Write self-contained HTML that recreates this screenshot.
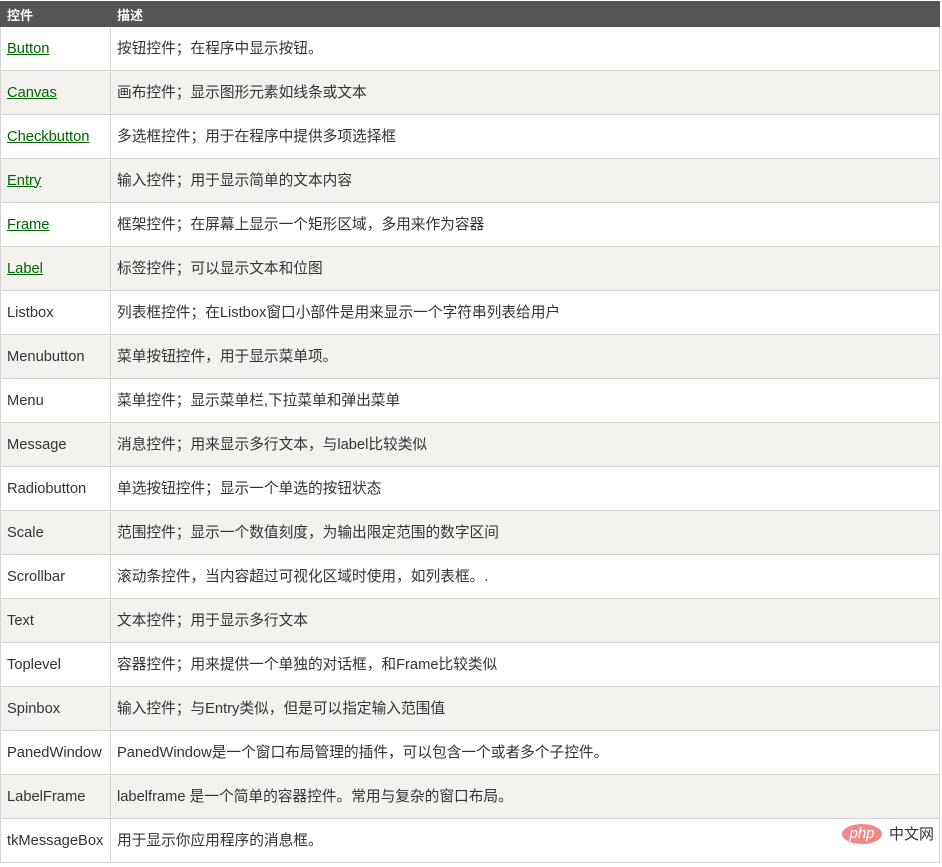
<!DOCTYPE html>
<html><head><meta charset="utf-8"><style>
body{margin:0;background:#fff;width:942px;height:867px;overflow:hidden;position:relative;font-family:"Liberation Sans","Noto Sans CJK SC",sans-serif;}
table{position:absolute;left:0;top:1px;border-collapse:collapse;width:940px;table-layout:fixed;font-size:14.7px;color:#333;}
th{background:#555;color:#fff;text-align:left;font-weight:bold;height:24px;padding:0 0 0 6px;font-size:13px;border:1px solid #555;}
td{height:43px;padding:0 0 0 6px;border:1px solid #d4d4d4;line-height:18px;}
tr:nth-child(even) td{background:#f3f2ee;}
tr:nth-child(odd) td{background:#fff;}
td a{color:#006600;text-decoration:underline;}
.wm{position:absolute;left:842px;top:823px;display:flex;align-items:center;}
.pill{width:40px;height:20px;border-radius:50%;background:#f08a8a;color:#fff;font-style:italic;font-size:15px;line-height:19px;text-align:center;}
.cn{margin-left:7px;font-size:15px;color:#333;}
</style></head><body>
<table>
<colgroup><col style="width:110px"><col></colgroup>
<thead><tr><th>控件</th><th>描述</th></tr></thead>
<tbody>
<tr><td><a>Button</a></td><td>按钮控件；在程序中显示按钮。</td></tr>
<tr><td><a>Canvas</a></td><td>画布控件；显示图形元素如线条或文本</td></tr>
<tr><td><a>Checkbutton</a></td><td>多选框控件；用于在程序中提供多项选择框</td></tr>
<tr><td><a>Entry</a></td><td>输入控件；用于显示简单的文本内容</td></tr>
<tr><td><a>Frame</a></td><td>框架控件；在屏幕上显示一个矩形区域，多用来作为容器</td></tr>
<tr><td><a>Label</a></td><td>标签控件；可以显示文本和位图</td></tr>
<tr><td>Listbox</td><td>列表框控件；在Listbox窗口小部件是用来显示一个字符串列表给用户</td></tr>
<tr><td>Menubutton</td><td>菜单按钮控件，用于显示菜单项。</td></tr>
<tr><td>Menu</td><td>菜单控件；显示菜单栏,下拉菜单和弹出菜单</td></tr>
<tr><td>Message</td><td>消息控件；用来显示多行文本，与label比较类似</td></tr>
<tr><td>Radiobutton</td><td>单选按钮控件；显示一个单选的按钮状态</td></tr>
<tr><td>Scale</td><td>范围控件；显示一个数值刻度，为输出限定范围的数字区间</td></tr>
<tr><td>Scrollbar</td><td>滚动条控件，当内容超过可视化区域时使用，如列表框。.</td></tr>
<tr><td>Text</td><td>文本控件；用于显示多行文本</td></tr>
<tr><td>Toplevel</td><td>容器控件；用来提供一个单独的对话框，和Frame比较类似</td></tr>
<tr><td>Spinbox</td><td>输入控件；与Entry类似，但是可以指定输入范围值</td></tr>
<tr><td>PanedWindow</td><td>PanedWindow是一个窗口布局管理的插件，可以包含一个或者多个子控件。</td></tr>
<tr><td>LabelFrame</td><td>labelframe 是一个简单的容器控件。常用与复杂的窗口布局。</td></tr>
<tr><td>tkMessageBox</td><td>用于显示你应用程序的消息框。</td></tr>
</tbody></table>
<div class="wm"><div class="pill">php</div><span class="cn">中文网</span></div>
</body></html>
